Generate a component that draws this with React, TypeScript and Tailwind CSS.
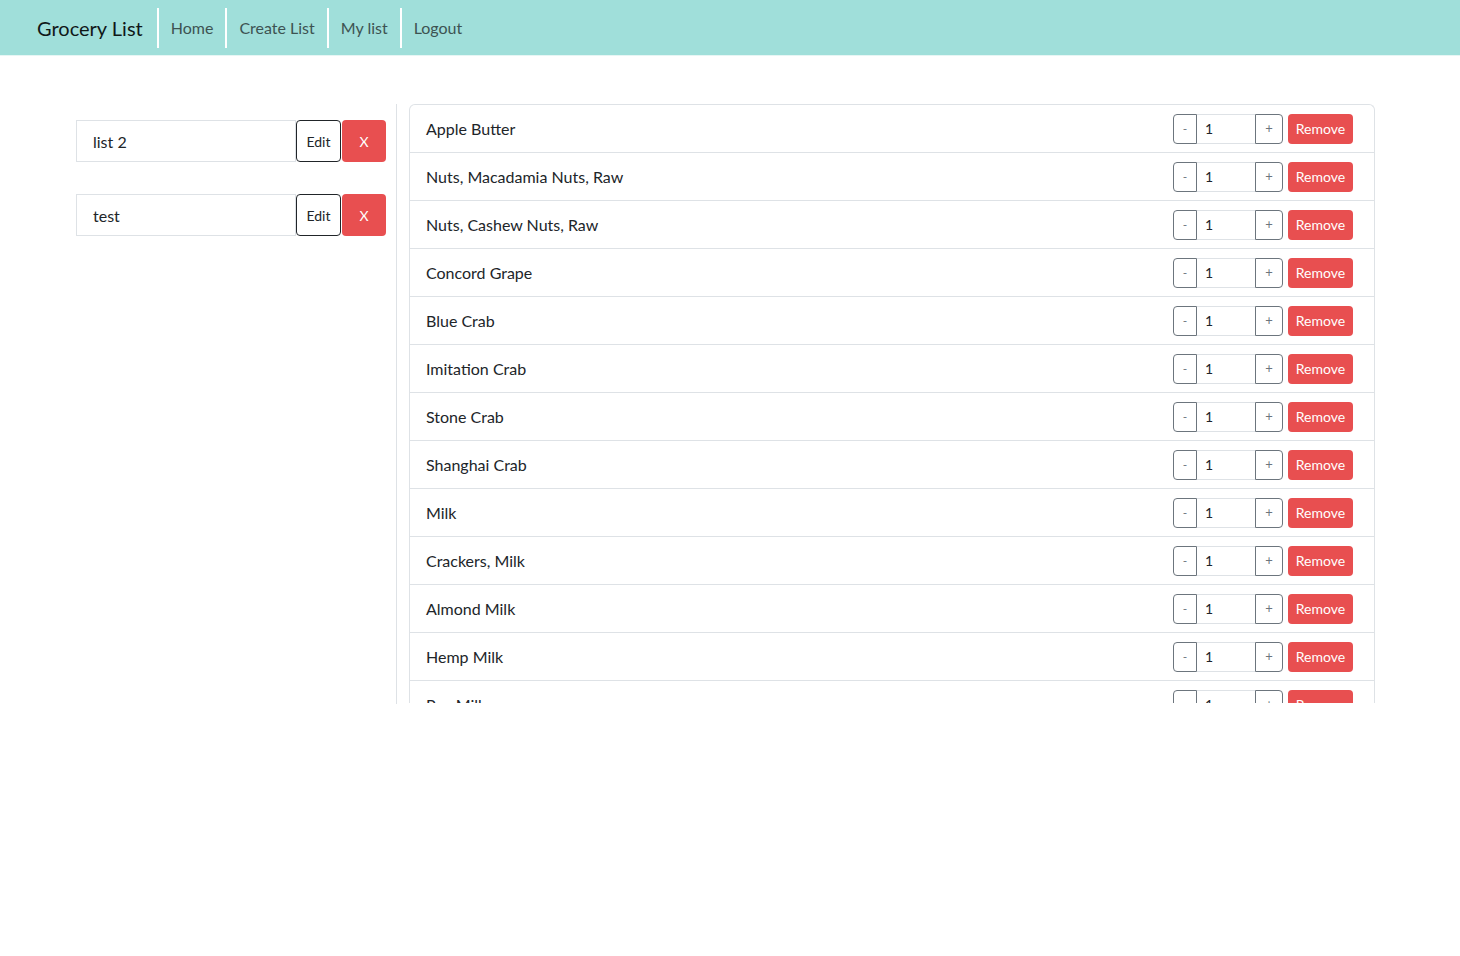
const lists = ["list 2", "test"];

const items = [
  "Apple Butter",
  "Nuts, Macadamia Nuts, Raw",
  "Nuts, Cashew Nuts, Raw",
  "Concord Grape",
  "Blue Crab",
  "Imitation Crab",
  "Stone Crab",
  "Shanghai Crab",
  "Milk",
  "Crackers, Milk",
  "Almond Milk",
  "Hemp Milk",
  "Pea Milk",
  "Soy Milk",
];

function ListRow({ name }: { name: string }) {
  return (
    <div className="flex h-[42px]">
      <div className="flex w-[220px] items-center border border-[#dee2e6] pl-[16px] pt-[1px] text-[16px] text-[#212529]">
        {name}
      </div>
      <button className="w-[45px] rounded-[4px] border border-[#212529] text-[14px] text-[#212529]">Edit</button>
      <button className="ml-[1px] w-[44px] rounded-[4px] bg-[#e84f50] text-[14px] text-white">X</button>
    </div>
  );
}

function ItemRow({ name }: { name: string }) {
  return (
    <div className="flex h-[48px] shrink-0 items-center justify-between border-b border-[#dee2e6] pl-[16px] pr-[21px]">
      <span className="text-[16px] text-[#212529]">{name}</span>
      <div className="flex items-center">
        <div className="flex h-[30px]">
          <button className="w-[24px] rounded-l-[4px] border border-[#6c757d] text-[12px] text-[#6c757d]">-</button>
          <div className="flex w-[58px] items-center border-y border-[#dee2e6] pl-[8px] text-[14px] text-[#212529]">1</div>
          <button className="w-[28px] rounded-r-[4px] border border-[#6c757d] text-[13px] text-[#6c757d]">+</button>
        </div>
        <button className="ml-[5px] h-[30px] w-[65px] rounded-[4px] bg-[#e84f50] text-[14px] text-white">Remove</button>
      </div>
    </div>
  );
}

export default function App() {
  return (
    <div className="min-h-[956px] bg-white" style={{ fontFamily: 'Lato, "Open Sans", sans-serif' }}>
      <nav className="flex h-[56px] items-center border-b border-[#e6f6f4] bg-[#a0dfda] pl-[37px]">
        <span className="mr-[14px] text-[20px] text-[#101818]">Grocery List</span>
        {["Home", "Create List", "My list", "Logout"].map((l) => (
          <div key={l} className="flex h-[40px] items-center border-l-2 border-white px-[12px] text-[16px] text-[#3d5352]">
            {l}
          </div>
        ))}
      </nav>
      <div className="flex pl-[76px] pt-[48px]">
        <div className="flex w-[310px] flex-col gap-[32px] pt-[16px]">
          {lists.map((l) => (
            <ListRow key={l} name={l} />
          ))}
        </div>
        <div className="ml-[10px] h-[600px] w-px bg-[#dee2e6]" />
        <div className="ml-[12px] flex h-[599px] w-[966px] flex-col overflow-hidden rounded-t-[6px] border-x border-t border-[#dee2e6]">
          {items.map((i) => (
            <ItemRow key={i} name={i} />
          ))}
        </div>
      </div>
    </div>
  );
}
